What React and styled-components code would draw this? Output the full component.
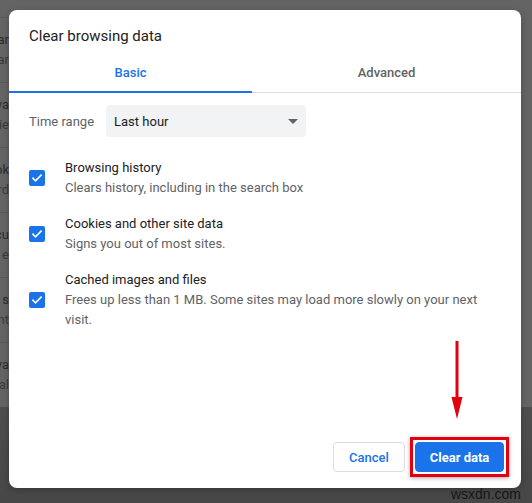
import React from 'react'
import styled, {createGlobalStyle} from 'styled-components'

const Global = createGlobalStyle`
  html, body {
    margin: 0;
    padding: 0;
    background: #4d4d4d;
  }
  * {
    box-sizing: border-box;
  }
`

const Screen = styled.div`
  position: relative;
  width: 532px;
  height: 503px;
  overflow: hidden;
  background: linear-gradient(#5f5f5f, #5f5f5f 405px, #4e4e4e 405px, #474747);
  font-family: Roboto, "Liberation Sans", sans-serif;
`

const PageCard = styled.div`
  display: flex;
  flex-direction: column;
  width: 532px;
  padding-top: 17px;
  background: #646464;
`

const PageRow = styled.div`
  display: flex;
  flex-direction: column;
  justify-content: center;
  align-items: flex-end;
  width: 9px;
  height: 65px;
  border-top: 1px solid #595959;
  overflow: hidden;
  font-size: 13px;
  line-height: 20px;
  white-space: nowrap;
`

const PageTitle = styled.span`
  color: #2c2c2c;
`

const PageSub = styled.span`
  color: #3b3b3b;
`

const Dialog = styled.div`
  position: absolute;
  left: 9px;
  top: 10px;
  width: 512px;
  height: 478px;
  display: flex;
  flex-direction: column;
  background: #fff;
  border-radius: 8px;
  box-shadow: 0 2px 6px rgba(0, 0, 0, 0.25);
`

const Title = styled.h2`
  margin: 0;
  padding: 16px 20px 0 20px;
  font-size: 15px;
  font-weight: 400;
  line-height: 20px;
  color: #202124;
`

const Tabs = styled.div`
  display: flex;
  margin-top: 5px;
  border-bottom: 1px solid #dadce0;
`

const Tab = styled.div`
  flex: ${props => props.active ? '0 0 243px' : '1'};
  height: 42px;
  display: flex;
  align-items: center;
  justify-content: center;
  padding-top: 2px;
  font-size: 13px;
  font-weight: 500;
  color: ${props => props.active ? '#1a73e8' : '#5f6368'};
  border-bottom: 2px solid ${props => props.active ? '#1a73e8' : 'transparent'};
  margin-bottom: -1px;
`

const Body = styled.div`
  display: flex;
  flex-direction: column;
  padding: 12px 20px 0 20px;
  flex: 1;
`

const RangeRow = styled.div`
  display: flex;
  align-items: center;
  gap: 12px;
  margin-bottom: 13px;
`

const Label = styled.span`
  font-size: 13px;
  color: #5f6368;
`

const Select = styled.div`
  display: flex;
  align-items: center;
  justify-content: space-between;
  width: 200px;
  height: 32px;
  padding: 0 8px;
  background: #f1f3f4;
  border-radius: 4px;
  font-size: 13px;
  color: #202124;
`

const Caret = styled.span`
  width: 0;
  height: 0;
  border-left: 5px solid transparent;
  border-right: 5px solid transparent;
  border-top: 5px solid #5f6368;
`

const Option = styled.div`
  display: flex;
  align-items: center;
  gap: 20px;
  padding: 8px 0;
`

const Check = styled.span`
  flex: none;
  display: flex;
  align-items: center;
  justify-content: center;
  width: 16px;
  height: 16px;
  border-radius: 2px;
  background: #1a73e8;
`

const OptionText = styled.div`
  display: flex;
  flex-direction: column;
  font-size: 13px;
  line-height: 20px;
`

const OptionTitle = styled.span`
  color: #202124;
`

const OptionSub = styled.span`
  color: #5f6368;
`

const Footer = styled.div`
  display: flex;
  justify-content: flex-end;
  align-items: center;
  padding: 0 12px 11px 0;
`

const Button = styled.button`
  display: flex;
  align-items: center;
  justify-content: center;
  height: 30px;
  width: ${props => props.primary ? '89px' : '72px'};
  padding: 0;
  border-radius: 4px;
  border: 1px solid ${props => props.primary ? '#1a73e8' : '#dadce0'};
  background: ${props => props.primary ? '#1a73e8' : '#fff'};
  color: ${props => props.primary ? '#fff' : '#1a73e8'};
  font-family: Roboto, "Liberation Sans", sans-serif;
  font-size: 13px;
  font-weight: ${props => props.primary ? 700 : 500};
`

const Highlight = styled.div`
  display: flex;
  margin-left: 5px;
  padding: 2px;
  border: 3px solid #e3000f;
  box-shadow: 0 1px 4px rgba(0, 0, 0, 0.35);
`

const Arrow = styled.svg`
  position: absolute;
  left: 450px;
  top: 341px;
`

const Watermark = styled.span`
  position: absolute;
  right: 11px;
  bottom: 2px;
  font-family: "Liberation Sans", Arial, sans-serif;
  font-size: 14px;
  line-height: 14px;
  color: #151515;
`

const pageRows = [
  ['ar', 'ar'],
  ['va', 'vie'],
  ['ok', 'rd'],
  ['cu', 'e'],
  ['e s', 'nt'],
  ['va', 'al'],
]

const options = [
  {title: 'Browsing history', sub: 'Clears history, including in the search box'},
  {title: 'Cookies and other site data', sub: 'Signs you out of most sites.'},
  {title: 'Cached images and files', sub: 'Frees up less than 1 MB. Some sites may load more slowly on your next visit.'},
]

const Tick = () => (
  <svg width="12" height="12" viewBox="0 0 24 24">
    <path d="M4 12.5l5 5L20 6.5" fill="none" stroke="#fff" strokeWidth="3.4" strokeLinecap="square" />
  </svg>
)

export default function App () {
  return (
    <Screen>
      <Global />
      <PageCard>
        {pageRows.map((row, i) => (
          <PageRow key={i}>
            <PageTitle>{row[0]}</PageTitle>
            <PageSub>{row[1]}</PageSub>
          </PageRow>
        ))}
      </PageCard>
      <Dialog>
        <Title>Clear browsing data</Title>
        <Tabs>
          <Tab active>Basic</Tab>
          <Tab>Advanced</Tab>
        </Tabs>
        <Body>
          <RangeRow>
            <Label>Time range</Label>
            <Select>
              Last hour
              <Caret />
            </Select>
          </RangeRow>
          {options.map(opt => (
            <Option key={opt.title}>
              <Check><Tick /></Check>
              <OptionText>
                <OptionTitle>{opt.title}</OptionTitle>
                <OptionSub>{opt.sub}</OptionSub>
              </OptionText>
            </Option>
          ))}
        </Body>
        <Footer>
          <Button>Cancel</Button>
          <Highlight>
            <Button primary>Clear data</Button>
          </Highlight>
        </Footer>
      </Dialog>
      <Arrow width="14" height="78" viewBox="0 0 14 78">
        <rect x="5.5" y="0" width="3" height="58" fill="#e3000f" />
        <polygon points="1.5,56 12.5,56 7,78" fill="#e3000f" />
      </Arrow>
      <Watermark>wsxdn.com</Watermark>
    </Screen>
  )
}
